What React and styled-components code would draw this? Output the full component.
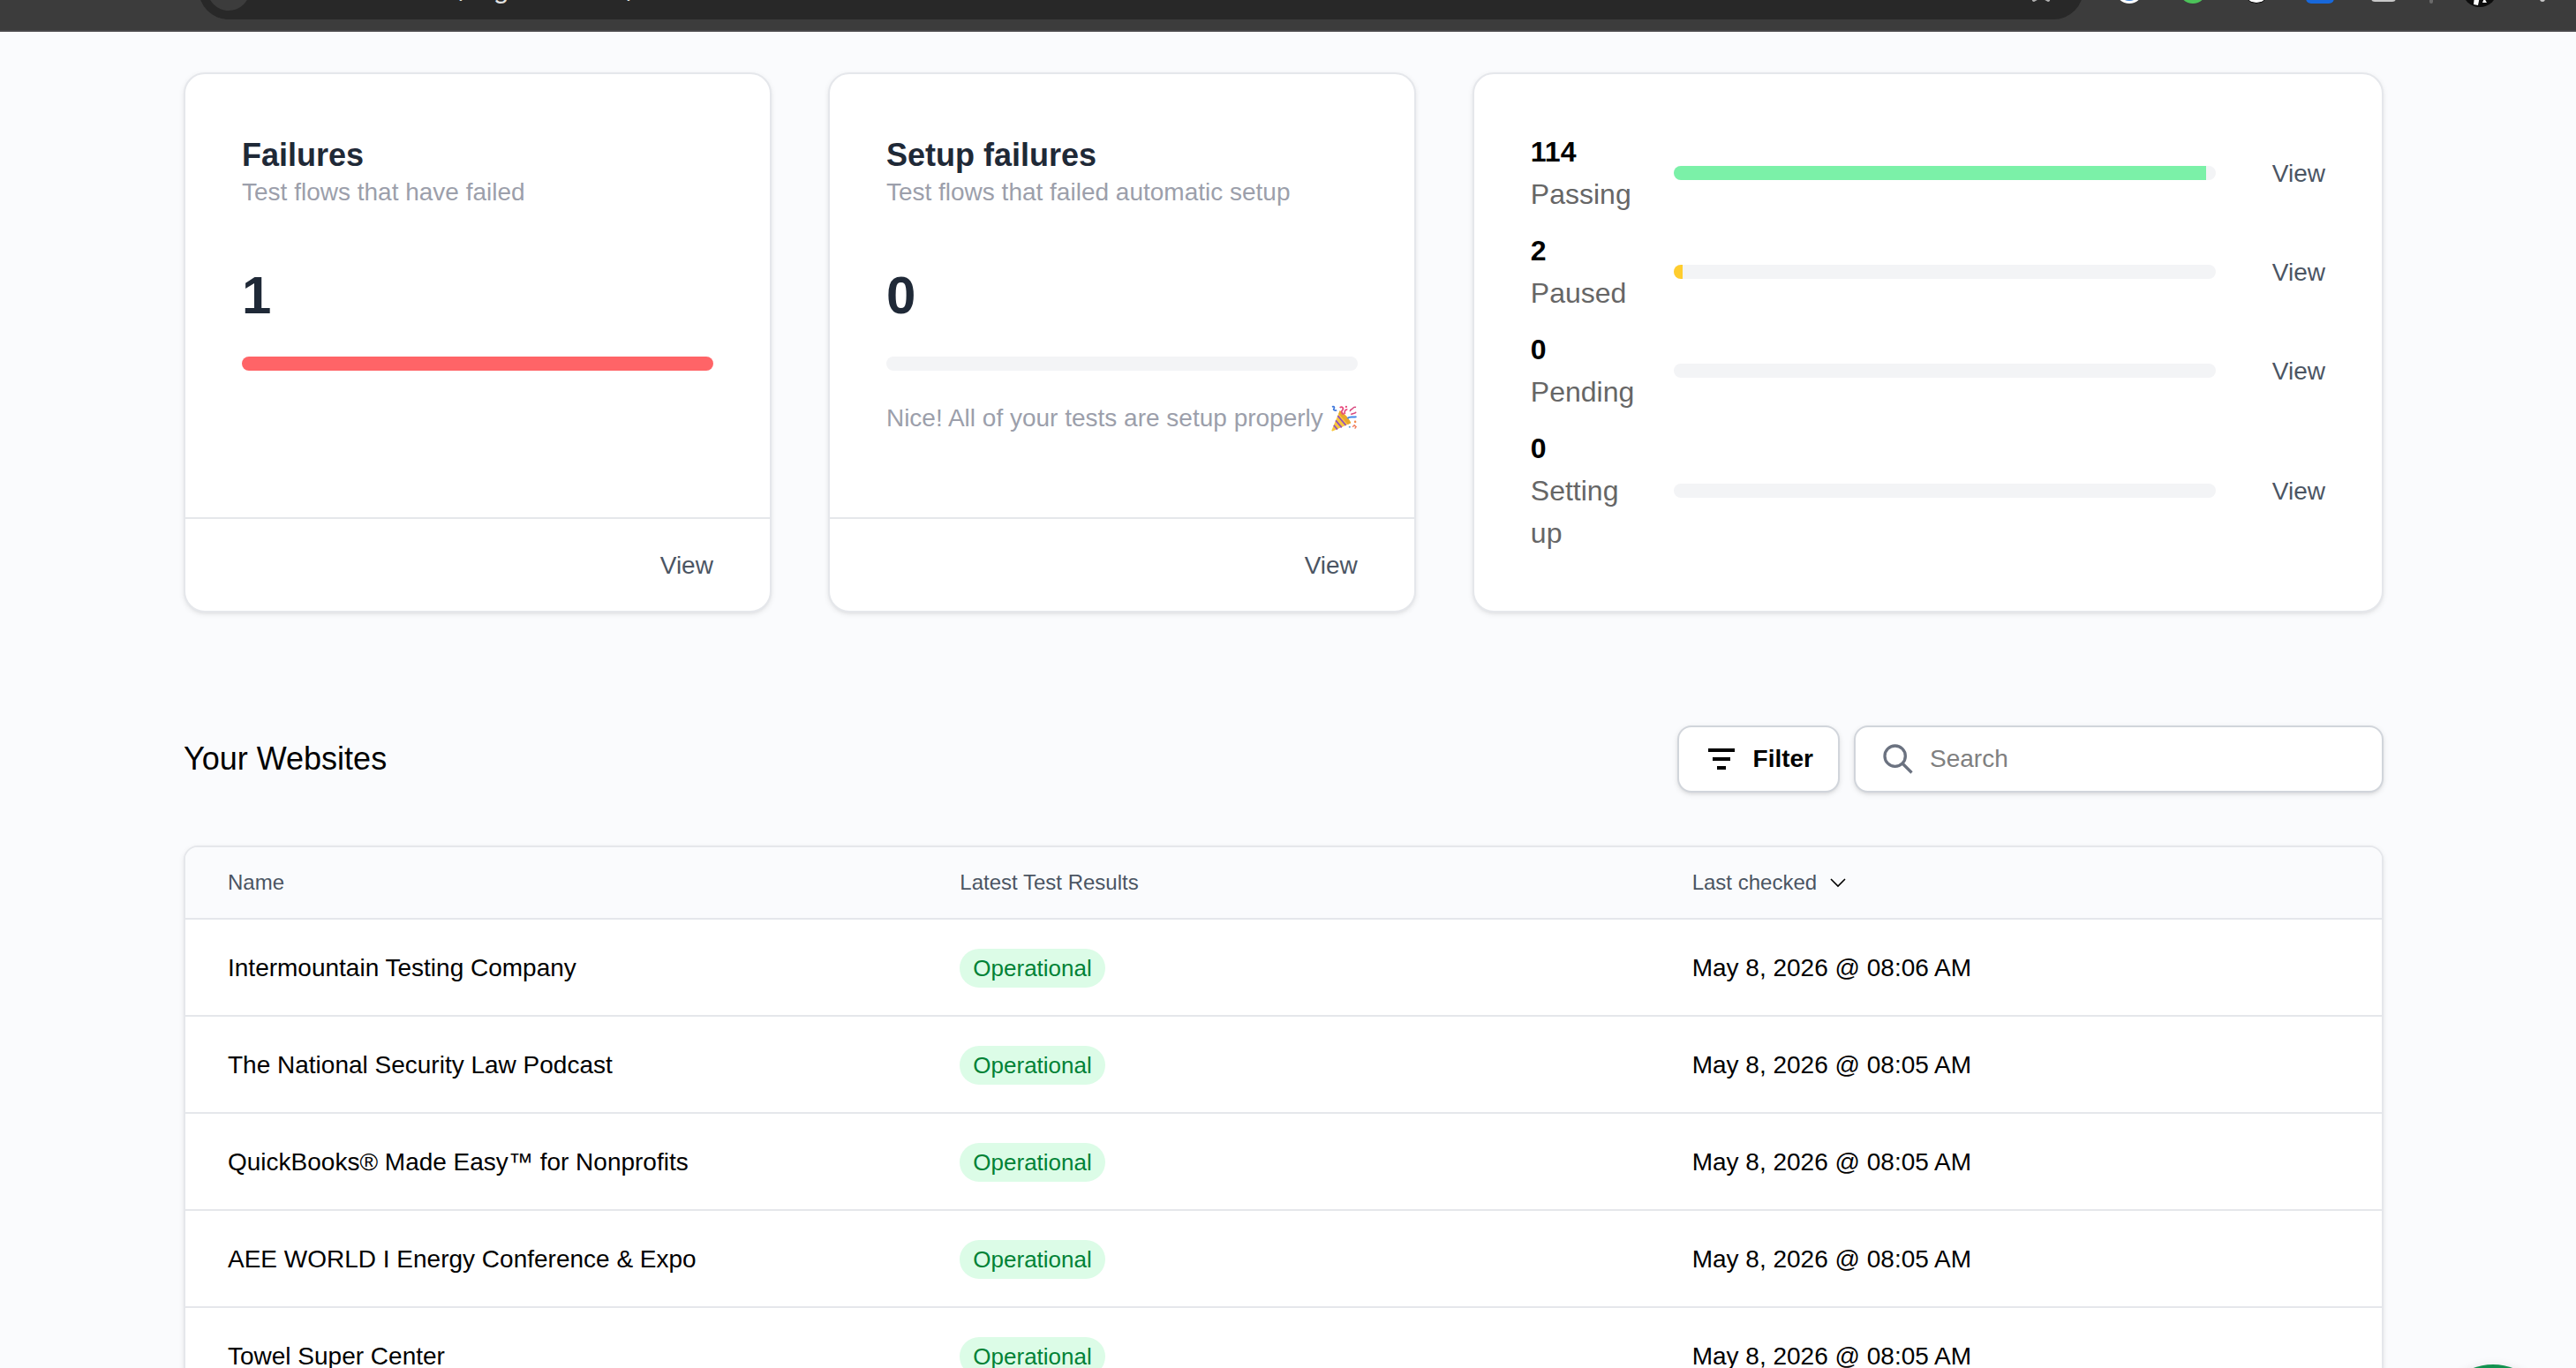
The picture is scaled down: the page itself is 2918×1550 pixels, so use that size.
import React, { useState } from 'react';
import styled, { createGlobalStyle } from 'styled-components';
import { Star } from 'lucide-react';

const GlobalStyle = createGlobalStyle`
  * {
    box-sizing: border-box;
  }
  body {
    margin: 0;
    background: #fafbfd;
    color: #000000;
    font-family: 'Liberation Sans', Arial, sans-serif;
    font-size: 28px;
  }
  h2, h3, p {
    margin: 0;
  }
`;

const Screen = styled.div`
  display: flex;
  flex-direction: column;
  height: 100vh;
  overflow: hidden;
`;

// browser toolbar, scrolled mostly out of sight above the page
const BrowserBar = styled.div`
  flex: none;
  display: flex;
  align-items: flex-end;
  height: 36px;
  padding: 0 32px 12px 225px;
  overflow: hidden;
  background: #3c3c3c;
  border-bottom: 2px solid #48474a;
`;

const AddressBar = styled.div`
  flex: 1;
  display: flex;
  align-items: center;
  height: 68px;
  margin-right: 36px;
  padding: 0 31px 0 10px;
  border-radius: 34px;
  background: #282828;
  color: #e3e3e3;
`;

const SiteInfo = styled.span`
  width: 48px;
  height: 48px;
  border-radius: 50%;
  background: #3c3c3c;
`;

const Address = styled.span`
  flex: 1;
  display: flex;
  padding-left: 237px;
  font-family: Inter, sans-serif;
  font-size: 28px;
  line-height: 32px;
`;

const AddressPart = styled.span`
  width: ${({ $width }) => $width}px;
`;

const Extensions = styled.div`
  display: flex;
  align-items: center;
  gap: 40px;
  height: 68px;
`;

const BarDivider = styled.span`
  width: 4px;
  height: 32px;
  margin: 0 33px 18px 36px;
  border-radius: 2px;
  background: #6a6a6a;
`;

const Avatar = styled.svg`
  width: 40px;
  height: 40px;
  margin: 0 45px 14px 0;
`;

const Kebab = styled.svg`
  width: 12px;
  height: 40px;
  margin-bottom: 14px;
`;

const Page = styled.main`
  padding: 46px 218px 46px 208px;
`;

const Cards = styled.section`
  display: grid;
  grid-template-columns: 20fr 20fr 31fr;
  gap: 64px;
`;

const Card = styled.article`
  display: flex;
  flex-direction: column;
  min-width: 0;
  border: 2px solid #e5e7eb;
  border-radius: 24px;
  background: #ffffff;
  box-shadow: 0 2px 6px rgba(0, 0, 0, 0.08), 0 2px 4px -2px rgba(0, 0, 0, 0.08);
`;

const CardBody = styled.div`
  flex: 1;
  padding: 64px;
`;

const CardTitle = styled.h3`
  color: #1f2937;
  font-size: 36px;
  line-height: 56px;
`;

const Muted = styled.p`
  display: flex;
  align-items: center;
  gap: 8px;
  color: #9c9fab;
  line-height: 28px;
  white-space: nowrap;
`;

const Count = styled.p`
  margin-top: 58px;
  color: #1f2937;
  font-size: 60px;
  font-weight: bold;
  line-height: 90px;
`;

const CardBar = styled.div`
  margin: 24px 0 38px;
`;

const Track = styled.div`
  height: 16px;
  border-radius: 8px;
  overflow: hidden;
  background: #f3f4f6;
`;

const Fill = styled.div`
  height: 100%;
  background: ${({ $color }) => $color};
`;

const CardFooter = styled.footer`
  display: flex;
  align-items: center;
  justify-content: flex-end;
  height: 106px;
  padding: 0 64px;
  border-top: 2px solid #e5e7eb;
`;

const ViewLink = styled.a`
  padding-top: 2px;
  color: #4b5563;
  line-height: 28px;
  text-decoration: none;
`;

const StatusList = styled.div`
  display: flex;
  flex-direction: column;
  gap: 16px;
`;

const StatusRow = styled.div`
  display: grid;
  grid-template-columns: 162px 1fr auto;
  align-items: center;
`;

const StatusLabel = styled.div`
  padding-right: 32px;
  color: #666666;
  font-size: 32px;
  line-height: 48px;
`;

const StatusCount = styled.strong`
  display: block;
  color: #000000;
`;

const StatusLink = styled(ViewLink)`
  margin-left: 64px;
`;

const Toolbar = styled.div`
  display: flex;
  align-items: center;
  gap: 16px;
  margin: 128px 0 60px;
`;

const Heading = styled.h2`
  margin-right: auto;
  font-size: 36px;
  font-weight: normal;
`;

const FilterButton = styled.button`
  display: flex;
  align-items: center;
  gap: 16px;
  height: 76px;
  padding: 0 28px;
  border: 2px solid #d1d5db;
  border-radius: 16px;
  background: #ffffff;
  box-shadow: 0 2px 6px rgba(0, 0, 0, 0.1), 0 2px 4px -2px rgba(0, 0, 0, 0.1);
  color: #000000;
  font: inherit;
  font-weight: bold;
  cursor: pointer;
`;

const SearchBox = styled.label`
  display: flex;
  align-items: center;
  gap: 16px;
  width: 600px;
  height: 76px;
  padding: 0 28px;
  border: 2px solid #d1d5db;
  border-radius: 16px;
  background: #ffffff;
  box-shadow: 0 2px 6px rgba(0, 0, 0, 0.1), 0 2px 4px -2px rgba(0, 0, 0, 0.1);
`;

const SearchInput = styled.input`
  flex: 1;
  min-width: 0;
  padding: 0;
  border: 0;
  outline: none;
  background: transparent;
  font: inherit;

  &::placeholder {
    color: #808080;
  }
`;

const TableFrame = styled.div`
  border: 2px solid #e5e7eb;
  border-radius: 16px;
  overflow: hidden;
  background: #ffffff;
  box-shadow: 0 2px 6px rgba(0, 0, 0, 0.08), 0 2px 4px -2px rgba(0, 0, 0, 0.08);
`;

const Table = styled.table`
  width: 100%;
  table-layout: fixed;
  border-collapse: separate;
  border-spacing: 0;
`;

const HeadCell = styled.th`
  height: 82px;
  padding: 0 0 0 48px;
  border-bottom: 2px solid #e5e7eb;
  background: #fafbfd;
  color: #4b5563;
  font-size: 24px;
  font-weight: normal;
  text-align: left;
`;

const SortButton = styled.button`
  display: flex;
  align-items: center;
  gap: 12px;
  padding: 0;
  border: 0;
  background: none;
  color: inherit;
  font: inherit;
  cursor: pointer;
`;

const Cell = styled.td`
  height: 110px;
  padding: 2px 0 0 48px;
  border-bottom: 2px solid #e5e7eb;
`;

const Badge = styled.span`
  display: inline-block;
  padding: 0 15px;
  border-radius: 22px;
  background: #dcfce7;
  color: #008236;
  font-size: 26px;
  line-height: 44px;
  vertical-align: middle;
`;

const ChatButton = styled.button`
  position: fixed;
  right: 30px;
  bottom: -124px;
  width: 128px;
  height: 128px;
  padding: 0;
  border: 0;
  border-radius: 50%;
  background: #12924f;
  box-shadow: 0 2px 12px rgba(0, 0, 0, 0.12);
`;

const statuses = [
  { label: 'Passing', count: 114, color: '#7bf1a8' },
  { label: 'Paused', count: 2, color: '#ffcd2e' },
  { label: 'Pending', count: 0, color: '#f3f4f6' },
  { label: 'Setting up', count: 0, color: '#f3f4f6' },
];

const total = statuses.reduce((sum, { count }) => sum + count, 0);

const websites = [
  { name: 'Intermountain Testing Company', checked: 'May 8, 2026 @ 08:06 AM' },
  { name: 'The National Security Law Podcast', checked: 'May 8, 2026 @ 08:05 AM' },
  { name: 'QuickBooks® Made Easy™ for Nonprofits', checked: 'May 8, 2026 @ 08:05 AM' },
  { name: 'AEE WORLD I Energy Conference & Expo', checked: 'May 8, 2026 @ 08:05 AM' },
  { name: 'Towel Super Center', checked: 'May 8, 2026 @ 08:05 AM' },
];

const FilterIcon = () => (
  <svg width="40" height="40" viewBox="0 0 40 40" aria-hidden="true">
    <path d="M5 8h30v4H5zM10 18h20v4H10zM15 28h10v4H15z" fill="#000000" />
  </svg>
);

const SearchIcon = () => (
  <svg width="40" height="40" viewBox="0 0 24 24" fill="none" aria-hidden="true">
    <path
      d="M20.6 20.6L15 15m2-5a7 7 0 11-14 0 7 7 0 0114 0z"
      stroke="#6b7280"
      strokeWidth="2"
      strokeLinecap="square"
      strokeLinejoin="round"
    />
  </svg>
);

const ChevronIcon = () => (
  <svg width="24" height="24" viewBox="0 0 24 24" fill="none" aria-hidden="true">
    <path d="M4 8l8 8 8-8" stroke="#000000" strokeWidth="1.6" />
  </svg>
);

const PartyIcon = () => (
  <svg width="32" height="32" viewBox="0 0 32 32" fill="none" role="img" aria-label="🎉">
    <path d="M11 7c4 2 10 8 13 14.5L2.6 31c-.8.3-1.4-.4-1.1-1.2z" fill="#f8c63c" />
    <path d="M11 7c4 2 10 8 13 14.5l-3.6 1.6C17 19 13 14.500 9.700 10.600z" fill="#e8a62c" />
    <path d="M8.600 13l9.600 11.200M6.200 18.500l7 8.200M4 24l4.200 5" stroke="#9350b8" strokeWidth="1.800" />
    <path d="M2 2.500c3-1 3 1.500 2 2.500s1.500 2.500 3.500 1.500" stroke="#3f78dc" strokeWidth="1.800" />
    <path d="M11 3.500c3-2 5 1 3 3s0 4 1.500 5M17 11c-1-4 1-6 3-5" stroke="#e8487c" strokeWidth="1.800" />
    <path d="M23 8c0-3 2-2 3-3.500s2-2 4-1.500M24 11.500c2-2 5-.5 6-3" stroke="#d84a80" strokeWidth="1.600" />
    <path d="M20 16c3-3 6-.5 10.500-2" stroke="#4388e8" strokeWidth="2" />
    <circle cx="18.500" cy="2.500" r="1.200" fill="#e8487c" />
    <circle cx="29" cy="20" r="1.300" fill="#f28c50" />
    <path d="M26 26l2-2 2 2-1.500 2" stroke="#f08060" strokeWidth="1.500" />
    <circle cx="22.500" cy="26" r="1.100" fill="#5f9cda" />
  </svg>
);

const Browser = () => (
  <BrowserBar>
    <AddressBar>
      <SiteInfo />
      <Address>
        <AddressPart $width={39}>/</AddressPart>
        <AddressPart $width={151}>g</AddressPart>
        <AddressPart $width={20}>/</AddressPart>
      </Address>
      <Star size={34} strokeWidth={1.5} color="#b0b0b0" />
    </AddressBar>
    <Extensions>
      <svg width="32" height="32" viewBox="0 0 32 32">
        <circle cx="16" cy="16" r="16" fill="#ffffff" />
        <circle cx="16" cy="16" r="13" fill="#4285d8" />
      </svg>
      <svg width="32" height="32" viewBox="0 0 32 32">
        <circle cx="16" cy="16" r="16" fill="#4cc35a" />
      </svg>
      <svg width="32" height="32" viewBox="0 0 32 32">
        <circle cx="16" cy="16" r="15.500" fill="#ffffff" stroke="#000000" strokeWidth="1" />
      </svg>
      <svg width="32" height="32" viewBox="0 0 32 32">
        <rect width="32" height="32" rx="6" fill="#1868db" />
      </svg>
      <svg width="32" height="32" viewBox="0 0 32 32">
        <rect x="4" y="4" width="24" height="24" rx="2" fill="none" stroke="#c8c8c8" strokeWidth="4" />
      </svg>
    </Extensions>
    <BarDivider />
    <Avatar viewBox="0 0 40 40">
      <circle cx="20" cy="20" r="20" fill="#0d0d0d" />
      <path d="M14 28h6l-2 10-5-1z" fill="#ffffff" />
      <path d="M25 30l3 5h-5z" fill="#ffffff" />
    </Avatar>
    <Kebab viewBox="0 0 12 40">
      <circle cx="6" cy="8" r="3" fill="#c8c8c8" />
      <circle cx="6" cy="20" r="3" fill="#c8c8c8" />
      <circle cx="6" cy="31" r="3" fill="#c8c8c8" />
    </Kebab>
  </BrowserBar>
);

const FailureCard = ({ title, text, count, children }) => (
  <Card>
    <CardBody>
      <CardTitle>{title}</CardTitle>
      <Muted>{text}</Muted>
      <Count>{count}</Count>
      <CardBar>
        <Track>{count > 0 && <Fill $color="#ff6467" />}</Track>
      </CardBar>
      {children}
    </CardBody>
    <CardFooter>
      <ViewLink href="#">View</ViewLink>
    </CardFooter>
  </Card>
);

const App = () => {
  const [search, setSearch] = useState('');

  return (
    <Screen>
      <GlobalStyle />
      <Browser />
      <Page>
        <Cards>
          <FailureCard title="Failures" text="Test flows that have failed" count={1} />
          <FailureCard title="Setup failures" text="Test flows that failed automatic setup" count={0}>
            <Muted>
              Nice! All of your tests are setup properly
              <PartyIcon />
            </Muted>
          </FailureCard>
          <Card>
            <CardBody>
              <StatusList>
                {statuses.map(({ label, count, color }) => (
                  <StatusRow key={label}>
                    <StatusLabel>
                      <StatusCount>{count}</StatusCount>
                      {label}
                    </StatusLabel>
                    <Track>
                      <Fill $color={color} style={{ width: `${(count / total) * 100}%` }} />
                    </Track>
                    <StatusLink href="#">View</StatusLink>
                  </StatusRow>
                ))}
              </StatusList>
            </CardBody>
          </Card>
        </Cards>

        <Toolbar>
          <Heading>Your Websites</Heading>
          <FilterButton type="button">
            <FilterIcon />
            Filter
          </FilterButton>
          <SearchBox>
            <SearchIcon />
            <SearchInput
              type="text"
              aria-label="Search"
              placeholder="Search"
              value={search}
              onChange={(event) => setSearch(event.target.value)}
            />
          </SearchBox>
        </Toolbar>

        <TableFrame>
          <Table>
            <thead>
              <tr>
                <HeadCell>Name</HeadCell>
                <HeadCell>Latest Test Results</HeadCell>
                <HeadCell>
                  <SortButton type="button">
                    Last checked
                    <ChevronIcon />
                  </SortButton>
                </HeadCell>
              </tr>
            </thead>
            <tbody>
              {websites
                .filter(({ name }) => name.toLowerCase().includes(search.toLowerCase()))
                .map(({ name, checked }) => (
                  <tr key={name}>
                    <Cell>{name}</Cell>
                    <Cell>
                      <Badge>Operational</Badge>
                    </Cell>
                    <Cell>{checked}</Cell>
                  </tr>
                ))}
            </tbody>
          </Table>
        </TableFrame>
      </Page>
      <ChatButton type="button" aria-label="Open chat" />
    </Screen>
  );
};

export default App;
